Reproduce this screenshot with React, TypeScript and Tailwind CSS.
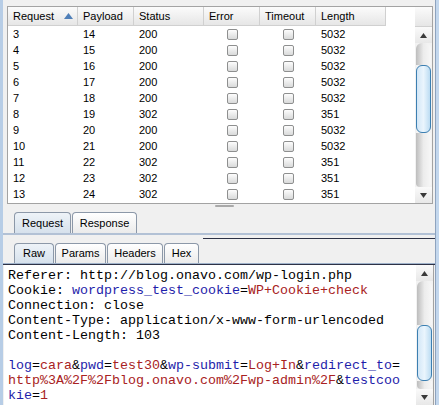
import React from 'react'

const ROWS: [number, number, number, number][] = [
  [3, 14, 200, 5032],
  [4, 15, 200, 5032],
  [5, 16, 200, 5032],
  [6, 17, 200, 5032],
  [7, 18, 200, 5032],
  [8, 19, 302, 351],
  [9, 20, 200, 5032],
  [10, 21, 200, 5032],
  [11, 22, 302, 351],
  [12, 23, 302, 351],
  [13, 24, 302, 351],
]

const COLS = [
  { label: 'Request', w: 'w-[70px]' },
  { label: 'Payload', w: 'w-[56px]' },
  { label: 'Status', w: 'w-[70px]' },
  { label: 'Error', w: 'w-[56px]' },
  { label: 'Timeout', w: 'w-[56px]' },
  { label: 'Length', w: 'w-[70px]' },
]

function Check() {
  return (
    <div className="w-[11px] h-[11px] rounded-[2px] border border-[#8e8f8f] bg-gradient-to-b from-[#fdfdfd] to-[#d9dada]" />
  )
}

function Arrow({ up }: { up?: boolean }) {
  return (
    <svg width="7" height="5" viewBox="0 0 7 5">
      <path d={up ? 'M3.5 0L7 5H0Z' : 'M0 0H7L3.5 5Z'} fill="#3a3a3a" />
    </svg>
  )
}

function ScrollBar({ before, thumb, after }: { before: string; thumb: string; after: string }) {
  return (
    <div className="flex flex-col w-[17px] h-full bg-[#f2f2f2]">
      <div className="h-[16px] flex items-center justify-center bg-gradient-to-b from-[#fafafa] to-[#e8e8e8]">
        <Arrow up />
      </div>
      <div className={`${before} mx-[1px] rounded-t-[6px] bg-gradient-to-r from-[#bdbdbd] via-[#ececec] to-[#f7f7f7]`} />
      <div className={`${thumb} mx-[1px] rounded-[6px] border border-[#3c7fb1] bg-gradient-to-r from-[#d3e7f7] via-[#eaf5fd] to-[#bcdcf2]`} />
      <div className="flex-1 mx-[1px] rounded-b-[4px] bg-gradient-to-r from-[#bdbdbd] via-[#ececec] to-[#f7f7f7]" />
      <div className="h-[16px] flex items-center justify-center bg-gradient-to-b from-[#fafafa] to-[#e8e8e8]">
        <Arrow />
      </div>
    </div>
  )
}

function Tab({ label, w, selected }: { label: string; w: string; selected?: boolean }) {
  return (
    <div
      className={`${w} h-full flex items-center justify-center rounded-t-[4px] border border-b-0 border-[#8c98a8] text-[11px] text-black ${
        selected ? 'bg-gradient-to-b from-[#eef3f8] to-[#d6e1ec]' : 'bg-gradient-to-b from-[#ffffff] to-[#ebebeb]'
      }`}
    >
      {label}
    </div>
  )
}

const B = ({ children }: { children: React.ReactNode }) => <span className="text-[#1e1eaa]">{children}</span>
const R = ({ children }: { children: React.ReactNode }) => <span className="text-[#a82222]">{children}</span>

export default function App() {
  return (
    <div className="w-[439px] h-[405px] overflow-hidden flex bg-[#f0f0f0] font-['Liberation_Sans',Arial,sans-serif]">
      <div className="w-[3px] h-full bg-[#b7cde6]" />
      <div className="w-[432px] h-full flex flex-col">
        {/* results table */}
        <div className="mt-[6px] ml-[4px] w-[426px] h-[198px] border border-[#a3a3a3] bg-white flex">
          <div className="w-[407px] flex flex-col">
            <div className="h-[19px] flex">
              {COLS.map((c, i) => (
                <div
                  key={c.label}
                  className={`${c.w} h-full flex items-center pl-[5px] text-[11px] text-black border-r border-b border-[#d0d0d0] bg-gradient-to-b from-[#fbfbfb] to-[#e6e6e6] ${
                    i === 0 ? 'justify-between pr-[4px]' : ''
                  }`}
                >
                  <span>{c.label}</span>
                  {i === 0 && (
                    <svg width="9" height="6" viewBox="0 0 9 6">
                      <path d="M4.5 0L9 6H0Z" fill="#4f7fb8" />
                    </svg>
                  )}
                </div>
              ))}
            </div>
            {ROWS.map(r => (
              <div key={r[0]} className="h-[16px] flex items-center text-[11px] text-black">
                <div className="w-[70px] pl-[5px]">{r[0]}</div>
                <div className="w-[56px] pl-[5px]">{r[1]}</div>
                <div className="w-[70px] pl-[5px]">{r[2]}</div>
                <div className="w-[56px] flex justify-center"><Check /></div>
                <div className="w-[56px] flex justify-center"><Check /></div>
                <div className="w-[70px] pl-[5px]">{r[3]}</div>
              </div>
            ))}
          </div>
          <div className="w-[17px] flex flex-col">
            <div className="h-[20px] border-b border-[#d0d0d0] bg-gradient-to-b from-[#fbfbfb] to-[#e6e6e6]" />
            <div className="flex-1">
              <ScrollBar before="h-[22px]" thumb="h-[68px]" after="" />
            </div>
          </div>
        </div>

        {/* splitter */}
        <div className="h-[8px] flex justify-center pt-[1px] pl-[10px]">
          <div className="w-[19px] h-[2px] rounded-full bg-[#a9a9a9]" />
        </div>

        {/* outer tabs */}
        <div className="h-[21px] flex pl-[11px] gap-[1px]">
          <Tab label="Request" w="w-[57px]" selected />
          <Tab label="Response" w="w-[65px]" />
        </div>
        <div className="h-[2px] bg-[#b2c1d5]" />
        <div className="h-[8px] flex flex-col">
          <div className="h-[3px]" />
          <div className="h-[1px] ml-[200px] bg-[#2d3246]" />
        </div>

        {/* inner tabs */}
        <div className="h-[20px] flex pl-[11px] gap-[1px]">
          <Tab label="Raw" w="w-[40px]" selected />
          <Tab label="Params" w="w-[51px]" />
          <Tab label="Headers" w="w-[56px]" />
          <Tab label="Hex" w="w-[35px]" />
        </div>
        <div className="h-[1px] bg-[#9fb2ca]" />
        <div className="h-[1px] bg-[#2d3246]" />

        {/* message editor */}
        <div className="flex-1 ml-[1px] w-[430px] flex bg-white border-r border-[#a3a3a3]">
          <div className="w-[412px] pl-[4px] pt-[3px] font-['Liberation_Mono','Courier_New',monospace] text-[13.33px] leading-[15px] text-black whitespace-pre">
            <div>Referer: http://blog.onavo.com/wp-login.php</div>
            <div>
              Cookie: <B>wordpress_test_cookie</B>=<R>WP+Cookie+check</R>
            </div>
            <div>Connection: close</div>
            <div>Content-Type: application/x-www-form-urlencoded</div>
            <div>Content-Length: 103</div>
            <div>&nbsp;</div>
            <div>
              <B>log</B>=<R>cara</R>&amp;<B>pwd</B>=<R>test30</R>&amp;<B>wp-submit</B>=<R>Log+In</R>&amp;<B>redirect_to</B>=
            </div>
            <div>
              <R>http%3A%2F%2Fblog.onavo.com%2Fwp-admin%2F</R>&amp;<B>testcoo</B>
            </div>
            <div>
              <B>kie</B>=<R>1</R>
            </div>
          </div>
          <ScrollBar before="h-[44px]" thumb="h-[56px]" after="" />
        </div>
      </div>
      <div className="w-[4px] h-full border-l border-[#8ea3be] bg-[#c3d7ed]" />
    </div>
  )
}
